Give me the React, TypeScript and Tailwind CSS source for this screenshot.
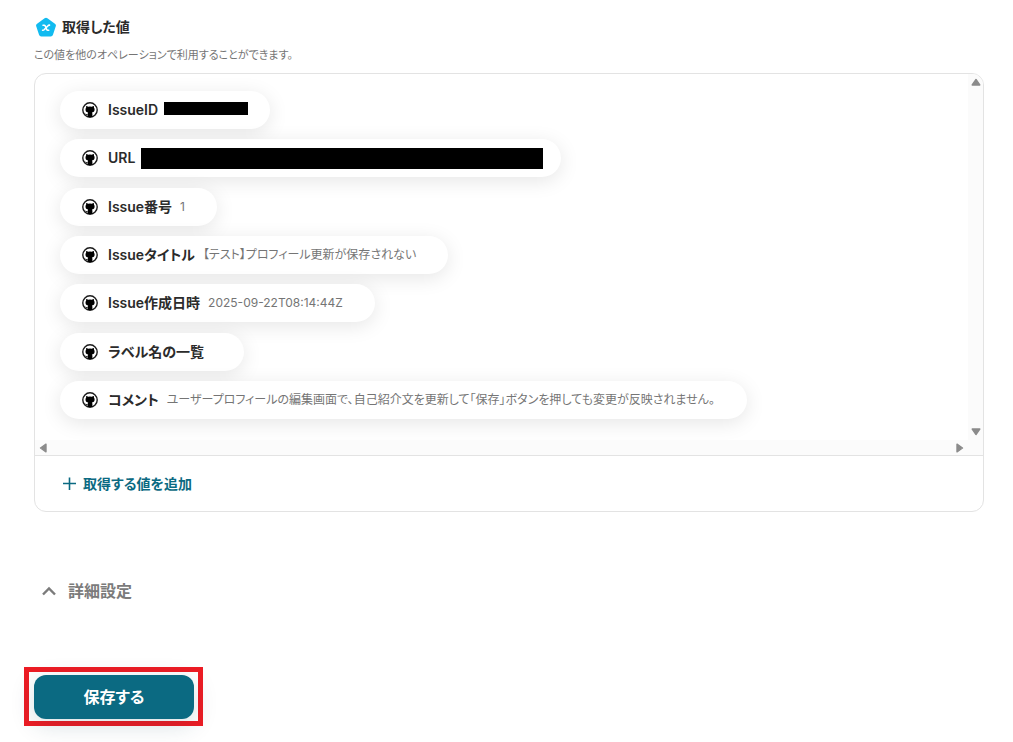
import React from 'react'

interface OutputItem {
  label: string
  value?: string
  // classes of the black bar that hides a private value
  mask?: string
}

const items: OutputItem[] = [
  { label: 'IssueID', mask: 'ml-1.5 mr-[22px] h-[13px] w-[84px] mb-1' },
  { label: 'URL', mask: 'ml-1.5 mr-[18px] h-[21px] w-[402px]' },
  { label: 'Issue番号', value: '1' },
  { label: 'Issueタイトル', value: '【テスト】プロフィール更新が保存されない' },
  { label: 'Issue作成日時', value: '2025-09-22T08:14:44Z' },
  { label: 'ラベル名の一覧', value: '' },
  {
    label: 'コメント',
    value: 'ユーザープロフィールの編集画面で、自己紹介文を更新して「保存」ボタンを押しても変更が反映されません。',
  },
]

const ValueIcon = () => (
  <svg viewBox="0 0 20 20" aria-hidden="true" className="h-5 w-5">
    <path
      d="M10 3.200 17.500 8.600 14.700 17.100H5.300L2.500 8.600Z"
      fill="#12bbf0"
      stroke="#12bbf0"
      strokeWidth="4.8"
      strokeLinejoin="round"
    />
    <path
      d="M7 8.200h1.200q.6 0 .9.600l1.700 3.900q.3.600.9.600h1M13.500 8.100q-.9-.1-1.500.6l-3.900 4.100q-.6.6-1.500.5"
      fill="none"
      stroke="white"
      strokeWidth="1.6"
      strokeLinecap="round"
    />
  </svg>
)

const GithubMark = () => (
  <svg viewBox="0 0 16 16" aria-hidden="true" className="h-4 w-4 shrink-0">
    <circle cx="8" cy="8" r="7.2" fill="white" stroke="#1c1c1c" strokeWidth="1.4" />
    <path
      d="M4.200 3.900c.8 0 1.400.4 1.900.8a8 8 0 0 1 3.800 0c.5-.4 1.100-.8 1.900-.8.3.8.3 1.300.1 1.700.5.6.7 1.200.7 1.900 0 2.200-1.200 2.900-2.700 3.100.4.4.5.9.5 1.500v3H5.700v-1.900c-1.500.2-2-.7-2.600-1.400.9-.1 1.300.8 2.600.6 0-.8.1-1.400.5-1.800-1.500-.2-2.700-.9-2.700-3.100 0-.7.200-1.300.7-1.900-.2-.4-.2-.9 0-1.700Z"
      fill="#000"
    />
  </svg>
)

const PlusIcon = () => (
  <svg viewBox="0 0 14 14" fill="none" stroke="currentColor" strokeWidth="1.6" aria-hidden="true" className="h-3.5 w-3.5">
    <path d="M6.500 .5v12.500M0 6.500h13" />
  </svg>
)

const ChevronUpIcon = () => (
  <svg viewBox="0 0 14 10" fill="none" stroke="currentColor" strokeWidth="2.4" aria-hidden="true" className="h-2.5 w-3.5">
    <path d="M1 8.500 7 2.500l6 6" />
  </svg>
)

const ArrowIcon = ({ className }: { className?: string }) => (
  <svg viewBox="0 0 10 10" aria-hidden="true" className={`h-2.5 w-2.5 ${className ?? ''}`}>
    <path d="M5 2.500 8.800 8H1.200Z" fill="#8b8b8b" stroke="#8b8b8b" strokeWidth="1.4" strokeLinejoin="round" />
  </svg>
)

function OutputPill({ item }: { item: OutputItem }) {
  return (
    <li className="flex h-[38px] items-center rounded-full bg-white pl-[22px] shadow-[0_4px_20px_rgba(0,0,0,0.1)]">
      <GithubMark />
      <span className="ml-2.5 text-sm font-semibold text-[#2b2b2b]">{item.label}</span>
      {item.mask ? (
        <span className={`bg-black ${item.mask}`} />
      ) : (
        <span className="ml-2 mr-8 text-xs text-[#757575]">{item.value}</span>
      )}
    </li>
  )
}

export default function App() {
  return (
    <main className="bg-white pt-4 pr-[29px] pb-4 pl-[34px] font-['Inter','Noto_Sans_CJK_JP',sans-serif] [font-feature-settings:'palt']">
      <section>
        <h2 className="flex items-center gap-1.5 pl-0.5 text-sm leading-[22px] font-semibold text-[#2b2b2b]">
          <ValueIcon />
          取得した値
        </h2>
        <p className="mt-2 text-[11px] leading-[18px] text-[#757575]">この値を他のオペレーションで利用することができます。</p>

        <div className="mt-[9px] overflow-hidden rounded-xl border border-[#e3e3e3]">
          <div className="grid grid-cols-[1fr_15px] grid-rows-[1fr_15px] border-b border-[#e3e3e3]">
            <div className="overflow-hidden px-[25px] pt-[17px] pb-[21px]">
              <ul className="flex min-h-[328px] flex-col items-start justify-between">
                {items.map((item) => (
                  <OutputPill key={item.label} item={item} />
                ))}
              </ul>
            </div>
            {/* Scroll tracks */}
            <div className="flex flex-col items-center justify-between bg-[#fbfbfb] py-[3px]">
              <ArrowIcon />
              <ArrowIcon className="rotate-180" />
            </div>
            <div className="flex items-center justify-between bg-[#fbfbfb] px-[3px]">
              <ArrowIcon className="-rotate-90" />
              <ArrowIcon className="rotate-90" />
            </div>
            <div className="bg-[#fbfbfb]" />
          </div>
          <button type="button" className="flex h-[55px] items-center gap-1.5 px-7 text-sm font-semibold text-[#0b6a82]">
            <PlusIcon />
            取得する値を追加
          </button>
        </div>
      </section>

      <button type="button" className="mt-[67px] flex items-center gap-3 pl-2 text-base font-semibold text-[#7b7b7b]">
        <ChevronUpIcon />
        詳細設定
      </button>

      {/* Highlight frame around the save button */}
      <div className="mt-16 -ml-2.5 w-fit border-5 border-[#ed1c24] pt-[3px] pr-1 pb-0.5 pl-[5px]">
        <button
          type="button"
          className="h-11 w-40 rounded-xl bg-[#0b6a82] text-base font-bold text-white shadow-[0_6px_24px_rgba(11,60,82,0.16)]"
        >
          保存する
        </button>
      </div>
    </main>
  )
}
